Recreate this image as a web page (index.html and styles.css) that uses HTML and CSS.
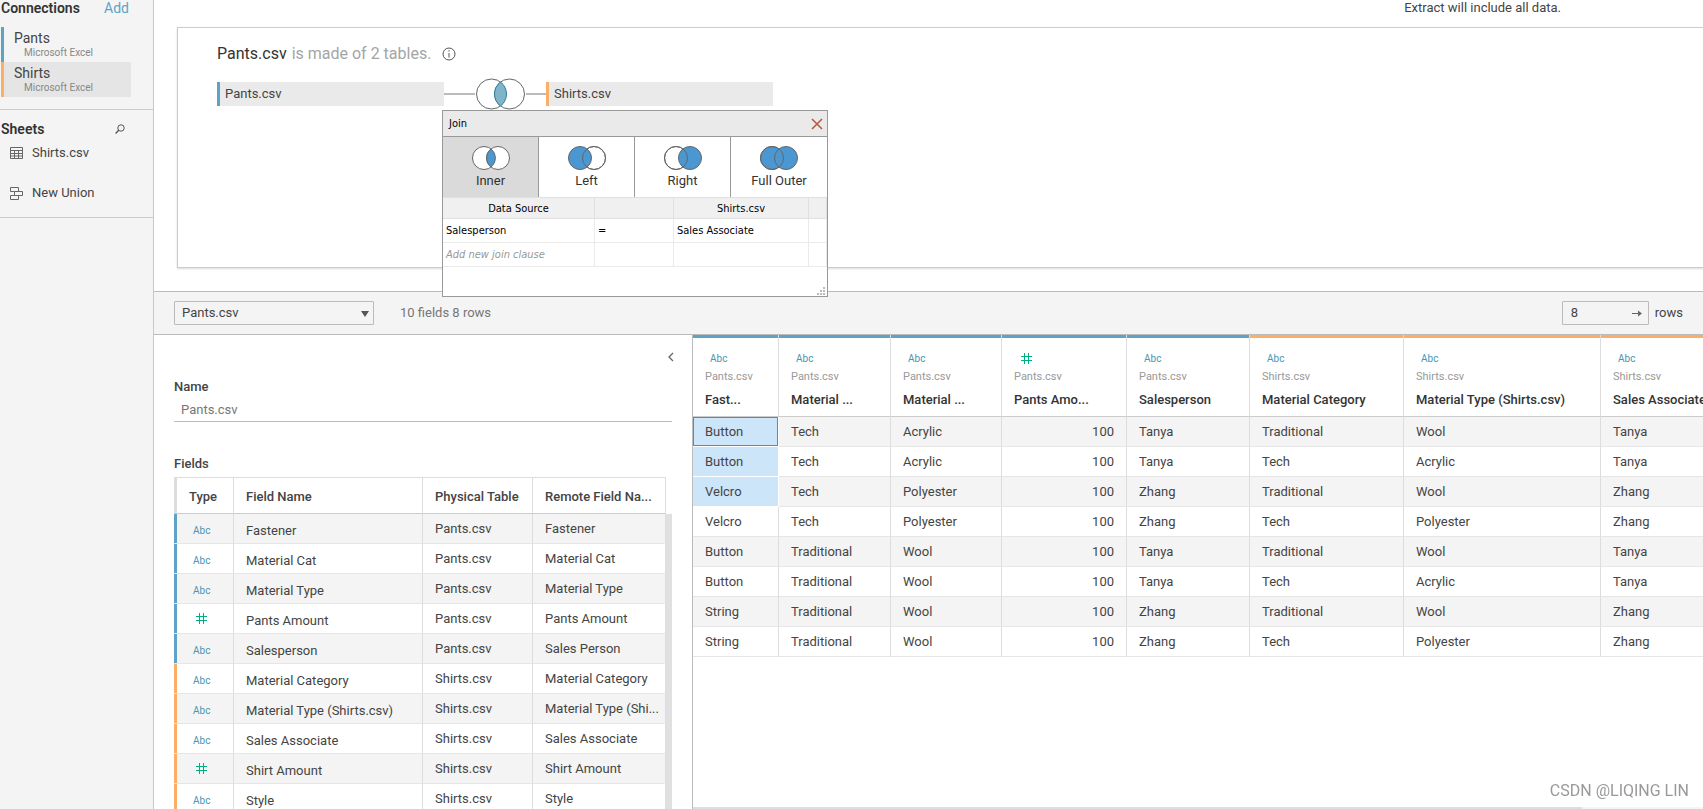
FILE: index.html
```
<!DOCTYPE html>
<html lang="en">
  <head>
    <title>Data Source</title>
    <meta charset="UTF-8" />
    <link rel="stylesheet" href="styles.css">
  </head>
  <body>
    <div class="app">
      <aside class="sidebar">
        <section class="connections">
          <div class="section-head">
            <h2>Connections</h2>
            <a href="#add">Add</a>
          </div>
          <ul class="connection-list">
            <li class="connection pants">
              <span class="connection-name">Pants</span>
              <span class="connection-type">Microsoft Excel</span>
            </li>
            <li class="connection shirts active">
              <span class="connection-name">Shirts</span>
              <span class="connection-type">Microsoft Excel</span>
            </li>
          </ul>
        </section>

        <section class="sheets">
          <div class="section-head">
            <h2>Sheets</h2>
            <button class="icon-btn" aria-label="Search sheets">
              <svg width="10" height="10" viewBox="0 0 10 10" fill="none" stroke="#555">
                <circle cx="6" cy="4" r="3.2" />
                <path d="M3.7 6.3 L0.6 9.4" stroke-width="1.4" />
              </svg>
            </button>
          </div>
          <ul class="sheet-list">
            <li>
              <svg width="14" height="13" viewBox="0 0 14 13" fill="none" stroke="#666">
                <path d="M0.5 0.5h12v11h-12z M0.5 3.5h12 M0.5 6.5h12 M0.5 9h12 M4.5 3.5v8 M8.5 3.5v8" />
              </svg>
              Shirts.csv
            </li>
            <li>
              <svg width="14" height="13" viewBox="0 0 14 13" fill="none" stroke="#666">
                <path d="M4.5 4.5h-4v-4h8v4 M4.5 4.5h8v4h-8z M4.5 8.5h-4v4h8v-4" />
              </svg>
              New Union
            </li>
          </ul>
        </section>
      </aside>

      <main class="main">
        <div class="canvas">
          <p class="extract-note">Extract will include all data.</p>

          <div class="card">
            <h1 class="card-title">
              Pants.csv <span>is made of 2 tables.</span>
              <svg width="14" height="14" viewBox="0 0 14 14" fill="none" stroke="#555">
                <circle cx="7" cy="7" r="6" />
                <path d="M7 6v4.5 M7 3.2v1.4" />
              </svg>
            </h1>

            <div class="join-row">
              <div class="table-pill pants">Pants.csv</div>
              <span class="join-line"></span>
              <svg class="join-venn" width="51" height="32" viewBox="0 0 51 32">
                <g fill="#fff" stroke="#666">
                  <circle cx="16.5" cy="16" r="15" />
                  <circle cx="34.5" cy="16" r="15" />
                </g>
                <path d="M25.5 4 A15 15 0 0 1 25.5 28 A15 15 0 0 1 25.5 4z" fill="#7fb4c9" stroke="#2f7f9d" />
              </svg>
              <span class="join-line short"></span>
              <div class="table-pill shirts">Shirts.csv</div>

              <div class="join-dialog" role="dialog" aria-label="Join">
                <div class="dialog-head">
                  <span>Join</span>
                  <button class="icon-btn" aria-label="Close">
                    <svg width="12" height="12" viewBox="0 0 12 12" stroke="#b85c41" stroke-width="1.6">
                      <path d="M1 1 L11 11 M11 1 L1 11" />
                    </svg>
                  </button>
                </div>
                <div class="join-types">
                  <button class="join-type active">
                    <svg width="40" height="26" viewBox="0 0 40 26">
                      <g fill="#fff" stroke="#666">
                        <circle cx="13" cy="13" r="11.5" />
                        <circle cx="27" cy="13" r="11.5" />
                      </g>
                      <path d="M20 4 A11.5 11.5 0 0 1 20 22 A11.5 11.5 0 0 1 20 4z" fill="#4a97d2" stroke="#666" />
                    </svg>
                    Inner
                  </button>
                  <button class="join-type">
                    <svg width="40" height="26" viewBox="0 0 40 26" stroke="#666">
                      <circle cx="27" cy="13" r="11.5" fill="#fff" />
                      <circle cx="13" cy="13" r="11.5" fill="#4a97d2" />
                      <circle cx="27" cy="13" r="11.5" fill="none" />
                    </svg>
                    Left
                  </button>
                  <button class="join-type">
                    <svg width="40" height="26" viewBox="0 0 40 26" stroke="#666">
                      <circle cx="13" cy="13" r="11.5" fill="#fff" />
                      <circle cx="27" cy="13" r="11.5" fill="#4a97d2" />
                      <circle cx="13" cy="13" r="11.5" fill="none" />
                    </svg>
                    Right
                  </button>
                  <button class="join-type">
                    <svg width="40" height="26" viewBox="0 0 40 26" stroke="#666">
                      <circle cx="13" cy="13" r="11.5" fill="#4a97d2" />
                      <circle cx="27" cy="13" r="11.5" fill="#4a97d2" />
                      <circle cx="13" cy="13" r="11.5" fill="none" />
                    </svg>
                    Full Outer
                  </button>
                </div>
                <table class="clauses">
                  <colgroup>
                    <col class="clause-left">
                    <col class="clause-op">
                    <col class="clause-right">
                    <col>
                  </colgroup>
                  <thead>
                    <tr><th>Data Source</th><th></th><th>Shirts.csv</th><th></th></tr>
                  </thead>
                  <tbody>
                    <tr><td>Salesperson</td><td>=</td><td>Sales Associate</td><td></td></tr>
                    <tr><td class="placeholder">Add new join clause</td><td></td><td></td><td></td></tr>
                  </tbody>
                </table>
                <svg class="grip" width="8" height="8" viewBox="0 0 8 8" fill="#bbb">
                  <path d="M6 0h2v2h-2z M3 3h2v2h-2z M6 3h2v2h-2z M0 6h2v2h-2z M3 6h2v2h-2z M6 6h2v2h-2z" />
                </svg>
              </div>
            </div>
          </div>
        </div>

        <div class="toolbar">
          <div class="select-wrap">
            <select aria-label="Table">
              <option>Pants.csv</option>
            </select>
            <svg width="8" height="6" viewBox="0 0 8 6"><path d="M0 0h8L4 6z" fill="#555" /></svg>
          </div>
          <span class="summary">10 fields 8 rows</span>
          <div class="row-limit">
            <div class="limit-box">
              <input type="text" id="rowCount" value="8">
              <svg width="10" height="7" viewBox="0 0 10 7" fill="#666"><path d="M0 3h6V0.5L10 3.5L6 6.5V4H0z" /></svg>
            </div>
            <label for="rowCount">rows</label>
          </div>
        </div>

        <div class="panes">
          <section class="details">
            <button class="icon-btn collapse" aria-label="Collapse">
              <svg width="6" height="10" viewBox="0 0 6 10" fill="none" stroke="#666" stroke-width="1.3">
                <path d="M5 1 L1 5 L5 9" />
              </svg>
            </button>
            <label class="label" for="tableName">Name</label>
            <input class="name-input" type="text" id="tableName" value="Pants.csv">
            <h3 class="label fields-label">Fields</h3>
            <div class="fields">
              <table class="fields-table">
                <colgroup>
                  <col class="f-type">
                  <col class="f-name">
                  <col class="f-table">
                  <col>
                </colgroup>
                <thead>
                  <tr><th>Type</th><th>Field Name</th><th>Physical Table</th><th>Remote Field Na...</th></tr>
                </thead>
                <tbody>
                  <tr class="pants"><td class="abc">Abc</td><td>Fastener</td><td>Pants.csv</td><td>Fastener</td></tr>
                  <tr class="pants"><td class="abc">Abc</td><td>Material Cat</td><td>Pants.csv</td><td>Material Cat</td></tr>
                  <tr class="pants"><td class="abc">Abc</td><td>Material Type</td><td>Pants.csv</td><td>Material Type</td></tr>
                  <tr class="pants"><td class="num"><svg width="11" height="11" viewBox="0 0 11 11" stroke="#00b180"><path d="M3.5 0v11 M7.5 0v11 M0 3.5h11 M0 7.5h11" /></svg></td><td>Pants Amount</td><td>Pants.csv</td><td>Pants Amount</td></tr>
                  <tr class="pants"><td class="abc">Abc</td><td>Salesperson</td><td>Pants.csv</td><td>Sales Person</td></tr>
                  <tr class="shirts"><td class="abc">Abc</td><td>Material Category</td><td>Shirts.csv</td><td>Material Category</td></tr>
                  <tr class="shirts"><td class="abc">Abc</td><td>Material Type (Shirts.csv)</td><td>Shirts.csv</td><td>Material Type (Shi...</td></tr>
                  <tr class="shirts"><td class="abc">Abc</td><td>Sales Associate</td><td>Shirts.csv</td><td>Sales Associate</td></tr>
                  <tr class="shirts"><td class="num"><svg width="11" height="11" viewBox="0 0 11 11" stroke="#00b180"><path d="M3.5 0v11 M7.5 0v11 M0 3.5h11 M0 7.5h11" /></svg></td><td>Shirt Amount</td><td>Shirts.csv</td><td>Shirt Amount</td></tr>
                  <tr class="shirts"><td class="abc">Abc</td><td>Style</td><td>Shirts.csv</td><td>Style</td></tr>
                </tbody>
              </table>
              <div class="scrollbar"></div>
            </div>
          </section>

          <section class="preview">
            <table class="grid">
              <colgroup>
                <col class="g-fastener">
                <col class="g-cat">
                <col class="g-type">
                <col class="g-amount">
                <col class="g-person">
                <col class="g-category">
                <col class="g-shirt-type">
                <col class="g-associate">
              </colgroup>
              <thead>
                <tr>
                  <th class="pants"><span class="type">Abc</span><span class="source">Pants.csv</span><span class="field">Fast...</span></th>
                  <th class="pants"><span class="type">Abc</span><span class="source">Pants.csv</span><span class="field">Material ...</span></th>
                  <th class="pants"><span class="type">Abc</span><span class="source">Pants.csv</span><span class="field">Material ...</span></th>
                  <th class="pants"><span class="type"><svg width="11" height="11" viewBox="0 0 11 11" stroke="#00b180"><path d="M3.5 0v11 M7.5 0v11 M0 3.5h11 M0 7.5h11" /></svg></span><span class="source">Pants.csv</span><span class="field">Pants Amo...</span></th>
                  <th class="pants"><span class="type">Abc</span><span class="source">Pants.csv</span><span class="field">Salesperson</span></th>
                  <th class="shirts"><span class="type">Abc</span><span class="source">Shirts.csv</span><span class="field">Material Category</span></th>
                  <th class="shirts"><span class="type">Abc</span><span class="source">Shirts.csv</span><span class="field">Material Type (Shirts.csv)</span></th>
                  <th class="shirts"><span class="type">Abc</span><span class="source">Shirts.csv</span><span class="field">Sales Associate</span></th>
                </tr>
              </thead>
              <tbody>
                <tr><td class="selected current">Button</td><td>Tech</td><td>Acrylic</td><td>100</td><td>Tanya</td><td>Traditional</td><td>Wool</td><td>Tanya</td></tr>
                <tr><td class="selected">Button</td><td>Tech</td><td>Acrylic</td><td>100</td><td>Tanya</td><td>Tech</td><td>Acrylic</td><td>Tanya</td></tr>
                <tr><td class="selected">Velcro</td><td>Tech</td><td>Polyester</td><td>100</td><td>Zhang</td><td>Traditional</td><td>Wool</td><td>Zhang</td></tr>
                <tr><td>Velcro</td><td>Tech</td><td>Polyester</td><td>100</td><td>Zhang</td><td>Tech</td><td>Polyester</td><td>Zhang</td></tr>
                <tr><td>Button</td><td>Traditional</td><td>Wool</td><td>100</td><td>Tanya</td><td>Traditional</td><td>Wool</td><td>Tanya</td></tr>
                <tr><td>Button</td><td>Traditional</td><td>Wool</td><td>100</td><td>Tanya</td><td>Tech</td><td>Acrylic</td><td>Tanya</td></tr>
                <tr><td>String</td><td>Traditional</td><td>Wool</td><td>100</td><td>Zhang</td><td>Traditional</td><td>Wool</td><td>Zhang</td></tr>
                <tr><td>String</td><td>Traditional</td><td>Wool</td><td>100</td><td>Zhang</td><td>Tech</td><td>Polyester</td><td>Zhang</td></tr>
              </tbody>
            </table>
            <div class="hscroll"><div class="hscroll-thumb"></div></div>
          </section>
        </div>
      </main>
    </div>
    <div class="watermark">CSDN @LIQING LIN</div>
  </body>
</html>
```
FILE: styles.css
```
* {
  box-sizing: border-box;
}

body {
  margin: 0;
  font-family: Roboto, "Liberation Sans", sans-serif;
  font-size: 13px;
  line-height: 16px;
  color: #444;
  background-color: white;
}

h1,
h2,
h3,
p,
ul {
  margin: 0;
  padding: 0;
  list-style: none;
}

button,
input,
select {
  font: inherit;
  color: inherit;
}

svg {
  display: block;
  flex-shrink: 0;
}

a {
  color: #5fa3c4;
  text-decoration: none;
}

.icon-btn {
  padding: 0;
  border: none;
  background: none;
}

.app {
  display: flex;
  height: 100vh;
  overflow: hidden;
}

/* Sidebar */
.sidebar {
  flex: 0 0 154px;
  background-color: #f4f4f4;
  border-right: 1px solid #c8c8c8;
}

.section-head {
  display: flex;
  justify-content: space-between;
  align-items: center;
  padding: 0 24px 0 1px;
}

.section-head h2 {
  font-size: 14px;
  font-weight: 600;
  color: #333;
}

.section-head a {
  font-size: 14px;
}

.connections {
  padding-bottom: 12px;
  border-bottom: 1px solid #ccc;
}

.connection-list {
  padding: 11px 22px 0 1px;
}

.connection {
  display: flex;
  flex-direction: column;
  height: 35px;
  padding: 3px 0 0 10px;
  border-left: 3px solid;
}

.connection.pants,
.table-pill.pants {
  border-color: #5fa3c4;
}

.connection.shirts,
.table-pill.shirts {
  border-color: #fbae68;
}

.connection.active {
  background-color: #e5e5e5;
}

.connection-name {
  font-size: 14px;
}

.connection-type {
  padding-left: 10px;
  font-size: 10px;
  line-height: 14px;
  color: #888;
}

.sheets {
  padding: 11px 0 16px;
  border-bottom: 1px solid #ccc;
}

.sheets .section-head {
  padding-right: 28px;
}

.sheet-list {
  display: flex;
  flex-direction: column;
  gap: 24px;
  padding: 8px 0 0 10px;
}

.sheet-list li {
  display: flex;
  align-items: center;
  gap: 8px;
}

/* Canvas */
.main {
  display: flex;
  flex: 1;
  flex-direction: column;
  min-width: 0;
}

.canvas {
  padding: 0 0 23px 23px;
}

.extract-note {
  padding: 0 142px 11px 0;
  text-align: right;
}

.card {
  height: 241px;
  padding: 16px 0 0 39px;
  border: 1px solid #ccc;
  border-right: none;
  box-shadow: 0 1px 2px rgba(0, 0, 0, 0.15);
}

.card-title {
  display: flex;
  align-items: center;
  gap: 5px;
  font-size: 16px;
  font-weight: 400;
  line-height: 20px;
  color: #333;
}

.card-title span {
  color: #a5a5a5;
}

.card-title svg {
  margin-left: 6px;
}

.join-row {
  position: relative;
  display: flex;
  align-items: center;
  margin-top: 14px;
}

.table-pill {
  width: 227px;
  padding: 4px 5px;
  background-color: #eaeaea;
  border-left: 3px solid;
}

.join-line {
  width: 31px;
  height: 2px;
  background-color: #bbb;
}

.join-line.short {
  width: 20px;
}

/* Join dialog */
.join-dialog {
  position: absolute;
  top: 32px;
  left: 225px;
  z-index: 2;
  width: 386px;
  height: 187px;
  font-family: "DejaVu Sans Condensed", "DejaVu Sans", sans-serif;
  font-size: 11px;
  color: black;
  background-color: white;
  border: 1px solid #999;
}

.dialog-head {
  display: flex;
  justify-content: space-between;
  align-items: center;
  padding: 5px 4px 4px 6px;
  background-color: #eaeaea;
  border-bottom: 1px solid #999;
}

.join-types {
  display: grid;
  grid-template-columns: repeat(4, 1fr);
}

.join-type {
  display: flex;
  flex-direction: column;
  align-items: center;
  gap: 2px;
  padding: 8px 0;
  font-family: Roboto, sans-serif;
  font-size: 13px;
  line-height: 16px;
  color: #333;
  background-color: white;
  border: none;
  border-right: 1px solid #999;
}

.join-type:last-child {
  border-right: none;
}

.join-type.active {
  background-color: #dadada;
}

.clauses {
  width: 100%;
  table-layout: fixed;
  border-spacing: 0;
}

.clause-left {
  width: 152px;
}

.clause-op {
  width: 79px;
}

.clause-right {
  width: 135px;
}

.clauses th {
  height: 22px;
  padding: 1px 0 0;
  font-weight: 400;
  background-color: #f0f0f0;
  border: solid #e0e0e0;
  border-width: 1px 1px 1px 0;
}

.clauses td {
  height: 24px;
  padding: 1px 3px 0;
  border: solid #eaeaea;
  border-width: 0 1px 1px 0;
}

.clauses .placeholder {
  font-style: italic;
  color: #999;
}

.grip {
  position: absolute;
  right: 2px;
  bottom: 1px;
}

/* Toolbar */
.toolbar {
  display: flex;
  align-items: center;
  padding: 9px 20px;
  background-color: #f4f4f4;
  border: solid #bbb;
  border-width: 1px 0;
}

.select-wrap {
  position: relative;
  width: 200px;
}

.select-wrap select {
  display: block;
  width: 100%;
  height: 24px;
  padding: 0 7px;
  appearance: none;
  background: none;
  border: 1px solid #bbb;
  border-radius: 1px;
}

.select-wrap svg {
  position: absolute;
  top: 10px;
  right: 5px;
}

.summary {
  padding-left: 26px;
  color: #777;
}

.row-limit {
  display: flex;
  align-items: center;
  gap: 6px;
  margin-left: auto;
}

.limit-box {
  display: flex;
  align-items: center;
  width: 87px;
  height: 24px;
  padding: 0 6px 0 8px;
  border: 1px solid #bbb;
  border-radius: 1px;
}

.limit-box input {
  flex: 1;
  min-width: 0;
  padding: 0;
  background: none;
  border: none;
}

/* Bottom panes */
.panes {
  display: flex;
  flex: 1;
  min-height: 0;
}

.details {
  display: flex;
  flex: 0 0 539px;
  flex-direction: column;
  padding: 17px 20px 0;
  border-right: 1px solid #bbb;
  overflow: hidden;
}

.details > * {
  flex-shrink: 0;
}

.collapse {
  align-self: flex-end;
  margin-right: -2px;
}

.label {
  margin-top: 17px;
  font-size: 13px;
  font-weight: 500;
}

.name-input {
  height: 27px;
  padding: 2px 7px 0;
  color: #777;
  border: none;
  border-bottom: 1px solid #bbb;
}

.fields-label {
  margin-top: 34px;
}

.fields {
  display: flex;
  margin-top: 5px;
}

.fields-table,
.grid {
  table-layout: fixed;
  border-spacing: 0;
}

.fields-table {
  flex: 1;
  width: 100%;
}

.f-type {
  width: 60px;
}

.f-name {
  width: 189px;
}

.f-table {
  width: 110px;
}

.fields-table th,
.fields-table td {
  padding: 0 0 0 12px;
  text-align: left;
  white-space: nowrap;
  border-right: 1px solid #ddd;
}

.fields-table th {
  height: 37px;
  padding-top: 2px;
  font-weight: 500;
  border-top: 1px solid #ddd;
  border-bottom: 1px solid #ccc;
}

.fields-table th:first-child {
  padding-left: 15px;
  box-shadow: inset 3px 0 #ddd;
}

.fields-table td {
  height: 30px;
  border-bottom: 1px solid #e6e6e6;
}

.fields-table td:nth-child(2) {
  padding-top: 4px;
}

.fields-table tbody tr:nth-child(odd),
.grid tbody tr:nth-child(odd) {
  background-color: #f4f4f4;
}

.fields-table .abc {
  padding: 4px 0 0 19px;
  font-size: 10px;
  color: #4996b2;
}

.fields-table .num {
  padding-left: 22px;
}

.fields-table .pants td:first-child {
  box-shadow: inset 3px 0 #5fa3c4;
}

.fields-table .shirts td:first-child {
  box-shadow: inset 3px 0 #fbae68;
}

.scrollbar {
  width: 6px;
  margin-top: 37px;
  background-color: #e0e0e0;
}

.preview {
  display: flex;
  flex: 1;
  flex-direction: column;
  justify-content: space-between;
  min-width: 0;
  overflow: hidden;
}

.grid {
  width: 1068px;
}

.g-fastener {
  width: 86px;
}

.g-cat {
  width: 112px;
}

.g-type {
  width: 111px;
}

.g-amount {
  width: 125px;
}

.g-person {
  width: 123px;
}

.g-category {
  width: 154px;
}

.g-shirt-type {
  width: 197px;
}

.g-associate {
  width: 160px;
}

.grid th {
  padding: 16px 12px 8px;
  font-weight: 400;
  text-align: left;
  border-right: 1px solid #ddd;
  border-bottom: 1px solid #ccc;
}

.grid th.pants {
  box-shadow: inset 0 3px #5fa3c4;
}

.grid th.shirts {
  box-shadow: inset 0 3px #fbae68;
}

.grid th span {
  display: block;
}

.grid th .type {
  display: flex;
  align-items: center;
  height: 16px;
  padding-left: 5px;
  font-size: 10px;
  color: #4996b2;
}

.grid .type svg {
  margin: 0 0 2px 2px;
}

.grid .source {
  margin-top: 2px;
  font-size: 11px;
  color: #999;
}

.grid .field {
  margin-top: 7px;
  font-weight: 500;
  color: #333;
  white-space: nowrap;
}

.grid td {
  height: 30px;
  padding: 0 12px;
  border-right: 1px solid #ddd;
  border-bottom: 1px solid #e6e6e6;
}

.grid td:nth-child(4) {
  text-align: right;
}

.grid td.selected {
  background-color: #cde5f8;
  background-clip: padding-box;
  border-color: white;
}

.grid td.current {
  box-shadow: inset 0 0 0 1px #3a96d3;
}

.hscroll {
  height: 2px;
  background-color: #f4f4f4;
}

.hscroll-thumb {
  width: 88%;
  height: 2px;
  background-color: #ddd;
}

.watermark {
  position: fixed;
  right: 14px;
  bottom: 8px;
  font-size: 16px;
  line-height: 20px;
  color: #999;
}
```
